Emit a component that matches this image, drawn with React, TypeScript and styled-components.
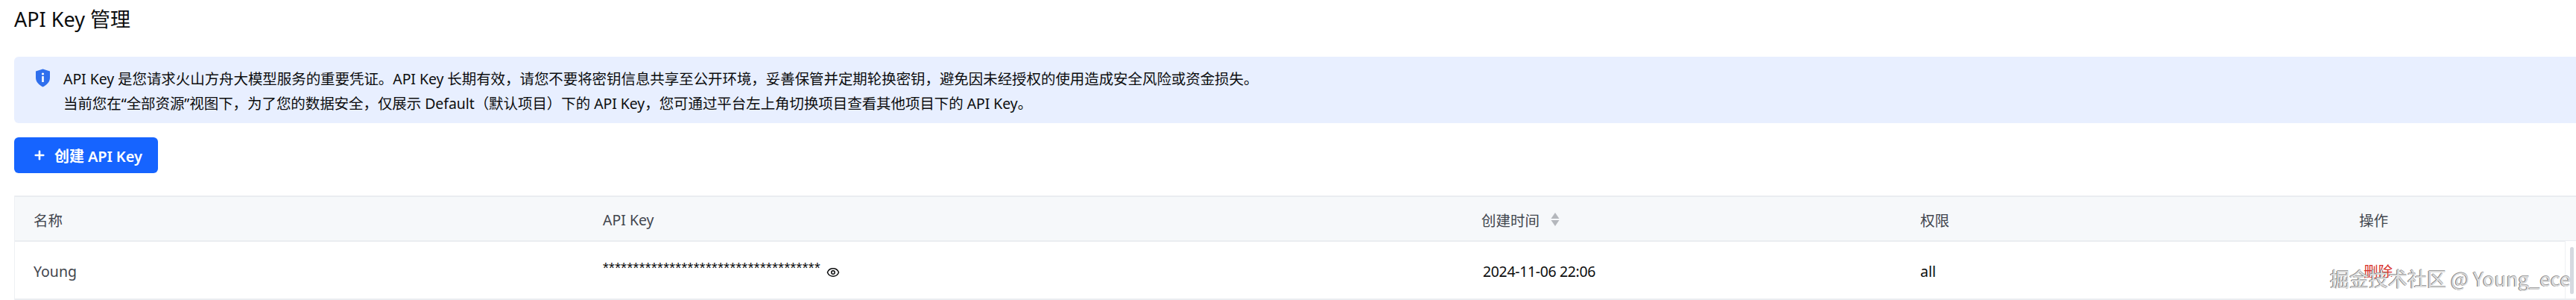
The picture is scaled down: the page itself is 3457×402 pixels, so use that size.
import { Eye, Plus } from "lucide-react";
import styled, { createGlobalStyle } from "styled-components";

const FONT = `"Noto Sans", "Noto Sans CJK SC", sans-serif`;

const GlobalStyle = createGlobalStyle`
  html, body {
    margin: 0;
    padding: 0;
    background: #ffffff;
    overflow: hidden;
  }
`;

const Page = styled.div`
  position: relative;
  width: 3457px;
  height: 402px;
  padding-left: 19px;
  box-sizing: border-box;
  font-family: ${FONT};
  font-size: 19.5px;
  color: #0c0d0e;
`;

const Title = styled.h1`
  margin: 0;
  height: 76px;
  padding-top: 7px;
  box-sizing: border-box;
  font-size: 27px;
  line-height: 38px;
  font-weight: 400;
  color: #0c0d0e;
`;

const Alert = styled.div`
  display: flex;
  gap: 17px;
  height: 89px;
  padding: 13px 0 0 28px;
  box-sizing: border-box;
  background: #e8efff;
  border-radius: 6px 0 0 6px;
`;

const AlertIcon = styled.svg`
  flex: none;
  width: 21px;
  height: 25px;
  margin-top: 3px;
`;

const AlertText = styled.div`
  line-height: 33px;
  letter-spacing: -0.07px;
  white-space: nowrap;
`;

const Toolbar = styled.div`
  display: flex;
  padding: 19px 0 30px;
`;

const PrimaryButton = styled.button`
  display: flex;
  align-items: center;
  gap: 11px;
  width: 193px;
  height: 48px;
  padding: 0 0 0 25px;
  box-sizing: border-box;
  border: 0;
  border-radius: 6px;
  background: #1664ff;
  color: #ffffff;
  font-family: ${FONT};
  font-size: 20px;
  font-weight: 600;
  letter-spacing: -0.1px;
  white-space: nowrap;
`;

const Table = styled.div`
  display: flex;
  flex-direction: column;
  border-left: 1px solid #eef0f3;
`;

const Row = styled.div<{ $head?: boolean }>`
  display: grid;
  grid-template-columns: 764px 1179px 589px 589px 316px;
  align-items: center;
  height: ${(props) => (props.$head ? "62px" : "78px")};
  box-sizing: border-box;
  background: ${(props) => (props.$head ? "#f6f8fa" : "#ffffff")};
  color: ${(props) => (props.$head ? "#42464e" : "#0c0d0e")};
  border-top: ${(props) => (props.$head ? "2px solid #eaedf1" : "0")};
  border-bottom: 2px solid #eaedf1;
`;

const Cell = styled.div`
  display: flex;
  align-items: center;
  padding: 2px 0 0 25px;
  white-space: nowrap;
`;

const NameText = styled.span`
  color: #42464e;
`;

const DateText = styled.span`
  margin-left: 2px;
  letter-spacing: -0.35px;
`;

const Stars = styled.span`
  font-family: "Liberation Sans", sans-serif;
  font-size: 20px;
  letter-spacing: 0.33px;
  margin-top: -8px;
`;

const EyeButton = styled.span`
  display: flex;
  margin: 4px 0 0 8px;
`;

const SortIcon = styled.svg`
  width: 12px;
  height: 20px;
  margin-left: 15px;
`;

const DeleteLink = styled.span`
  margin: -2px 0 0 6px;
  color: #d7312a;
`;

const ScrollTrack = styled.div`
  position: absolute;
  right: 0;
  top: 323px;
  width: 15px;
  height: 77px;
  padding: 8px 3px 6px 6px;
  box-sizing: border-box;
  background: #ffffff;
  border-left: 1px solid #eef0f3;
`;

const ScrollThumb = styled.div`
  height: 100%;
  border-radius: 3px;
  background: #d5d9e0;
`;

const Watermark = styled.div`
  position: absolute;
  left: 3127px;
  top: 354px;
  font-family: "Noto Sans CJK SC", "Noto Sans", sans-serif;
  font-size: 26px;
  line-height: 38px;
  white-space: nowrap;
  color: #dedede;
  text-shadow: -1px 0 0 #707070, 0 -1px 0 #a0a0a0;
`;

export default function App() {
  return (
    <Page>
      <GlobalStyle />
      <Title>API Key 管理</Title>
      <Alert>
        <AlertIcon viewBox="0 0 21 25">
          <path
            d="M10.5 0.5 L20 3.5 V12 C20 18 15.5 22 10.5 24.5 C5.5 22 1 18 1 12 V3.5 Z"
            fill="#2f6fed"
          />
          <circle cx="10.5" cy="7" r="1.6" fill="#ffffff" />
          <rect x="9.2" y="10" width="2.6" height="8" rx="0.6" fill="#ffffff" />
        </AlertIcon>
        <AlertText>
          API Key 是您请求火山方舟大模型服务的重要凭证。API Key 长期有效，请您不要将密钥信息共享至公开环境，妥善保管并定期轮换密钥，避免因未经授权的使用造成安全风险或资金损失。
          <br />
          当前您在“全部资源”视图下，为了您的数据安全，仅展示 Default（默认项目）下的 API Key，您可通过平台左上角切换项目查看其他项目下的 API Key。
        </AlertText>
      </Alert>
      <Toolbar>
        <PrimaryButton>
          <Plus size={18} strokeWidth={3.5} />
          创建 API Key
        </PrimaryButton>
      </Toolbar>
      <Table>
        <Row $head>
          <Cell>名称</Cell>
          <Cell>API Key</Cell>
          <Cell>
            创建时间
            <SortIcon viewBox="0 0 12 20">
              <path d="M6 1 L11.5 9 H0.5 Z" fill="#b4b7bc" />
              <path d="M6 19 L11.5 11 H0.5 Z" fill="#b4b7bc" />
            </SortIcon>
          </Cell>
          <Cell>权限</Cell>
          <Cell>操作</Cell>
        </Row>
        <Row>
          <Cell>
            <NameText>Young</NameText>
          </Cell>
          <Cell>
            <Stars>************************************</Stars>
            <EyeButton>
              <Eye size={18} strokeWidth={2} />
            </EyeButton>
          </Cell>
          <Cell>
            <DateText>2024-11-06 22:06</DateText>
          </Cell>
          <Cell>all</Cell>
          <Cell>
            <DeleteLink>删除</DeleteLink>
          </Cell>
        </Row>
      </Table>
      <ScrollTrack>
        <ScrollThumb />
      </ScrollTrack>
      <Watermark>掘金技术社区 @ Young_ece</Watermark>
    </Page>
  );
}
